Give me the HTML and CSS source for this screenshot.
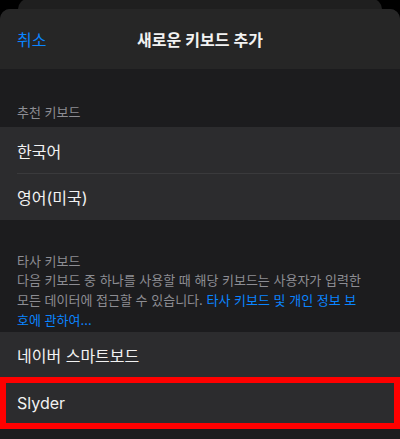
FILE: index.html
```html
<!DOCTYPE html>
<html lang="ko">
<head>
<meta charset="utf-8">
<link rel="stylesheet" href="styles.css">
</head>
<body>
<div class="back-card"></div>
<div class="sheet">
  <header class="nav">
    <span class="cancel">취소</span>
    <span class="title">새로운 키보드 추가</span>
    <span></span>
  </header>
  <div class="group-header first">추천 키보드</div>
  <ul class="list">
    <li class="row sep">한국어</li>
    <li class="row">영어(미국)</li>
  </ul>
  <div class="group-header second">타사 키보드</div>
  <p class="footer">다음 키보드 중 하나를 사용할 때 해당 키보드는 사용자가 입력한<br>모든 데이터에 접근할 수 있습니다. <span class="link">타사 키보드 및 개인 정보 보<br>호에 관하여...</span></p>
  <ul class="list">
    <li class="row naver">네이버 스마트보드</li>
    <li class="row slyder">Slyder</li>
  </ul>
</div>
</body>
</html>
```
FILE: styles.css
```css
* { box-sizing: border-box; }
html, body {
  margin: 0;
  padding: 0;
  background: #000;
  width: 400px;
  height: 439px;
  overflow: hidden;
  font-family: Inter, "Noto Sans CJK KR", sans-serif;
  color: #f2f2f2;
}
.back-card {
  margin: -1px 18px 0;
  height: 10px;
  border-radius: 10px 10px 0 0;
  background: #1f1f1f;
}
.sheet {
  background: #1c1c1e;
  border-radius: 10px 10px 0 0;
  overflow: hidden;
  height: 430px;
}
.nav {
  height: 60px;
  background: #262626;
  display: grid;
  grid-template-columns: 1fr auto 1fr;
  align-items: center;
  padding: 0 17px;
}
.cancel {
  color: #0a84ff;
  font-size: 16px;
}
.title {
  font-size: 16px;
  font-weight: 600;
  color: #f2f2f2;
}
.group-header {
  font-size: 13px;
  color: #8d8d93;
  padding-left: 17px;
}
.group-header.first {
  line-height: 16px;
  padding-top: 35px;
  padding-bottom: 7px;
}
.group-header.second {
  line-height: 17px;
  padding-top: 33px;
}
.footer {
  margin: 0;
  padding: 0 17px 2px;
  font-size: 13px;
  line-height: 20px;
  color: #8d8d93;
  white-space: nowrap;
}
.link { color: #0a84ff; }
.list {
  list-style: none;
  margin: 0;
  padding: 0;
  background: #2c2c2e;
}
.row {
  height: 46px;
  display: flex;
  align-items: center;
  padding-left: 17px;
  font-size: 16px;
  position: relative;
}
.row.sep {
  height: 47px;
}
.row.sep::after {
  content: "";
  position: absolute;
  left: 17px;
  right: 0;
  bottom: 0;
  height: 1px;
  background: #3a3a3c;
}
.row.naver { height: 45px; }
.row.slyder {
  height: 52px;
  border: 6px solid #ff0000;
  padding-left: 11px;
}
```
